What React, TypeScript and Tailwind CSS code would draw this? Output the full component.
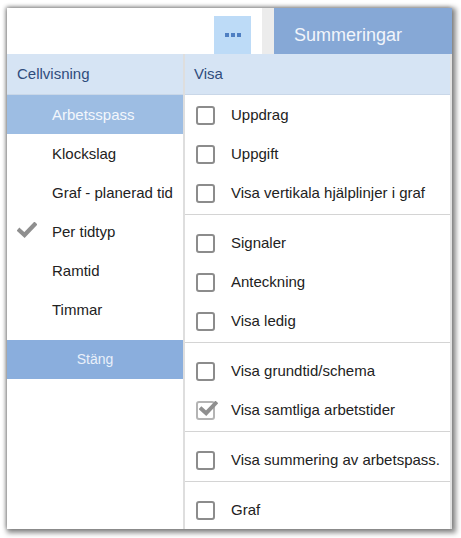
const cellOptions = [
  { label: "Arbetsspass", active: true },
  { label: "Klockslag" },
  { label: "Graf - planerad tid" },
  { label: "Per tidtyp", checked: true },
  { label: "Ramtid" },
  { label: "Timmar" },
];

const groups: { label: string; checked?: boolean }[][] = [
  [{ label: "Uppdrag" }, { label: "Uppgift" }, { label: "Visa vertikala hjälplinjer i graf" }],
  [{ label: "Signaler" }, { label: "Anteckning" }, { label: "Visa ledig" }],
  [{ label: "Visa grundtid/schema" }, { label: "Visa samtliga arbetstider", checked: true }],
  [{ label: "Visa summering av arbetspass." }],
  [{ label: "Graf" }],
];

function CheckMark({ className }: { className?: string }) {
  return (
    <svg viewBox="0 0 20 16" className={className}>
      <path d="M2.5 8.5 L7.5 13 L17.5 2.5" fill="none" stroke="currentColor" strokeWidth="4.2" strokeLinecap="square" />
    </svg>
  );
}

function Box({ checked }: { checked?: boolean }) {
  return (
    <span className="relative block h-[19px] w-[19px]">
      <span className={`block h-full w-full rounded-[3px] border-2 ${checked ? "border-[#b4b4b4]" : "border-[#8c8c8c]"}`} />
      {checked && <CheckMark className="absolute left-[3px] top-[0px] h-[15px] w-[19px] text-[#8f8f8f]" />}
    </span>
  );
}

export default function App() {
  return (
    <div className="h-[538px] w-[461px] bg-white pl-[7px] pt-[8px] font-['Liberation_Sans',Arial,sans-serif]">
      <div className="flex h-[521px] w-[445px] flex-col bg-white shadow-[2px_2px_5px_2px_rgba(0,0,0,0.45),-1px_-1px_4px_rgba(0,0,0,0.3)]">
        {/* top bar */}
        <div className="flex h-[46px] shrink-0">
          <div className="flex-1" />
          <div className="mt-[8px] flex w-[37px] items-center justify-center gap-[2px] bg-[#bddbf7]">
            <span className="h-[4px] w-[4px] bg-[#4f7fc2]" />
            <span className="h-[4px] w-[4px] bg-[#4f7fc2]" />
            <span className="h-[4px] w-[4px] bg-[#4f7fc2]" />
          </div>
          <div className="w-[11px]" />
          <div className="w-[12px] bg-[#ececec]" />
          <div className="flex w-[178px] items-center bg-[#86a8d6] pl-[20px] pt-[9px] text-[18px] text-[#f1f5fb]">
            Summeringar
          </div>
        </div>

        <div className="flex min-h-0 flex-1">
          {/* left column */}
          <div className="flex w-[176px] flex-col">
            <div className="flex h-[41px] items-center border-b border-[#c9d7e8] bg-[#d6e4f4] pl-[10px] text-[15px] text-[#2f4c7c]">
              Cellvisning
            </div>
            {cellOptions.map((o) => (
              <div
                key={o.label}
                className={`relative flex h-[39px] items-center pl-[45px] pt-[1px] text-[15px] ${o.active ? "bg-[#9dbde3] text-[#f3f7fc]" : "text-[#222]"}`}
              >
                {o.checked && <CheckMark className="absolute left-[10px] top-[10px] h-[16px] w-[20px] text-[#8f8f8f]" />}
                {o.label}
              </div>
            ))}
            <div className="mt-[11px] flex h-[39px] items-center justify-center bg-[#8aaedd] text-[14px] text-[#e9f0fa]">
              Stäng
            </div>
          </div>

          {/* divider */}
          <div className="w-[2px] bg-[#dedede]" />

          {/* right column */}
          <div className="flex flex-1 flex-col border-r-2 border-[#e2e2e2]">
            <div className="flex h-[41px] items-center border-b border-[#c9d7e8] bg-[#d6e4f4] pl-[9px] text-[15px] text-[#2f4c7c]">
              Visa
            </div>
            {groups.map((g, gi) => (
              <div
                key={gi}
                className={`${gi > 0 ? "pt-[8px]" : ""} ${gi < groups.length - 1 ? "border-b border-[#d4d4d4] pb-[2px]" : ""}`}
              >
                {g.map((item) => (
                  <div key={item.label} className="flex h-[39px] items-center gap-[16px] pl-[11px] pt-[1px] text-[15px] text-[#222]">
                    <Box checked={item.checked} />
                    {item.label}
                  </div>
                ))}
              </div>
            ))}
          </div>
        </div>
      </div>
    </div>
  );
}
